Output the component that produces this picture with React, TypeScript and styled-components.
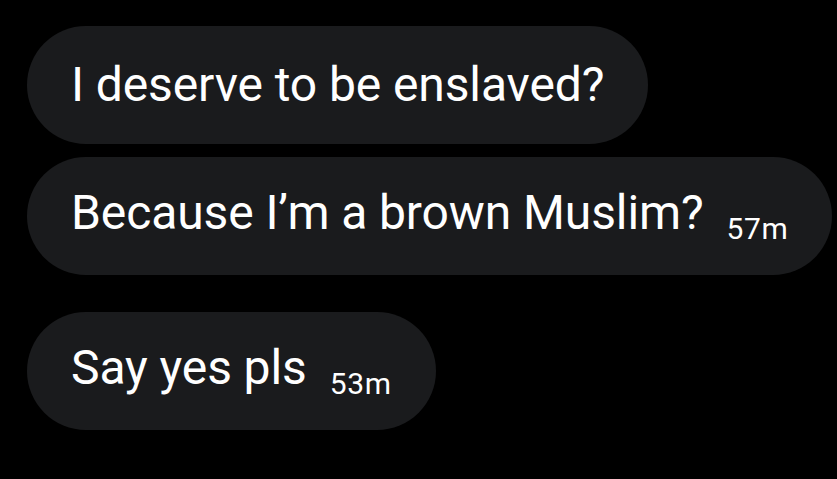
import styled, { createGlobalStyle } from 'styled-components'

const GlobalStyle = createGlobalStyle`
  html, body {
    margin: 0;
    padding: 0;
    background: #000;
  }
  body {
    font-family: Roboto, Inter, "Liberation Sans", sans-serif;
    -webkit-font-smoothing: antialiased;
  }
`

const Thread = styled.div`
  display: flex;
  flex-direction: column;
  align-items: flex-start;
  padding: 26px 0 0 27px;
  width: 837px;
  height: 479px;
  box-sizing: border-box;
  overflow: hidden;
`

const Bubble = styled.div<{ $gapTop?: number }>`
  display: flex;
  align-items: center;
  height: 118px;
  margin-top: ${(p) => p.$gapTop ?? 0}px;
  padding: 0 44px;
  box-sizing: border-box;
  border-radius: 59px;
  background: #1a1b1d;
  white-space: nowrap;
`

const Text = styled.span`
  color: #fff;
  font-size: 48px;
  line-height: 1;
  letter-spacing: -0.1px;
`

const Time = styled.span`
  color: #fff;
  font-size: 30px;
  margin-left: 23px;
  letter-spacing: 0.6px;
  vertical-align: -10px;
`

const messages = [
  { text: 'I deserve to be enslaved?', gap: 0 },
  { text: 'Because I\u2019m a brown Muslim?', time: '57m', gap: 13 },
  { text: 'Say yes pls', time: '53m', gap: 37 },
]

export default function App() {
  return (
    <>
      <GlobalStyle />
      <Thread>
        {messages.map((m) => (
          <Bubble key={m.text} $gapTop={m.gap}>
            <Text>
              {m.text}
              {m.time && <Time>{m.time}</Time>}
            </Text>
          </Bubble>
        ))}
      </Thread>
    </>
  )
}
